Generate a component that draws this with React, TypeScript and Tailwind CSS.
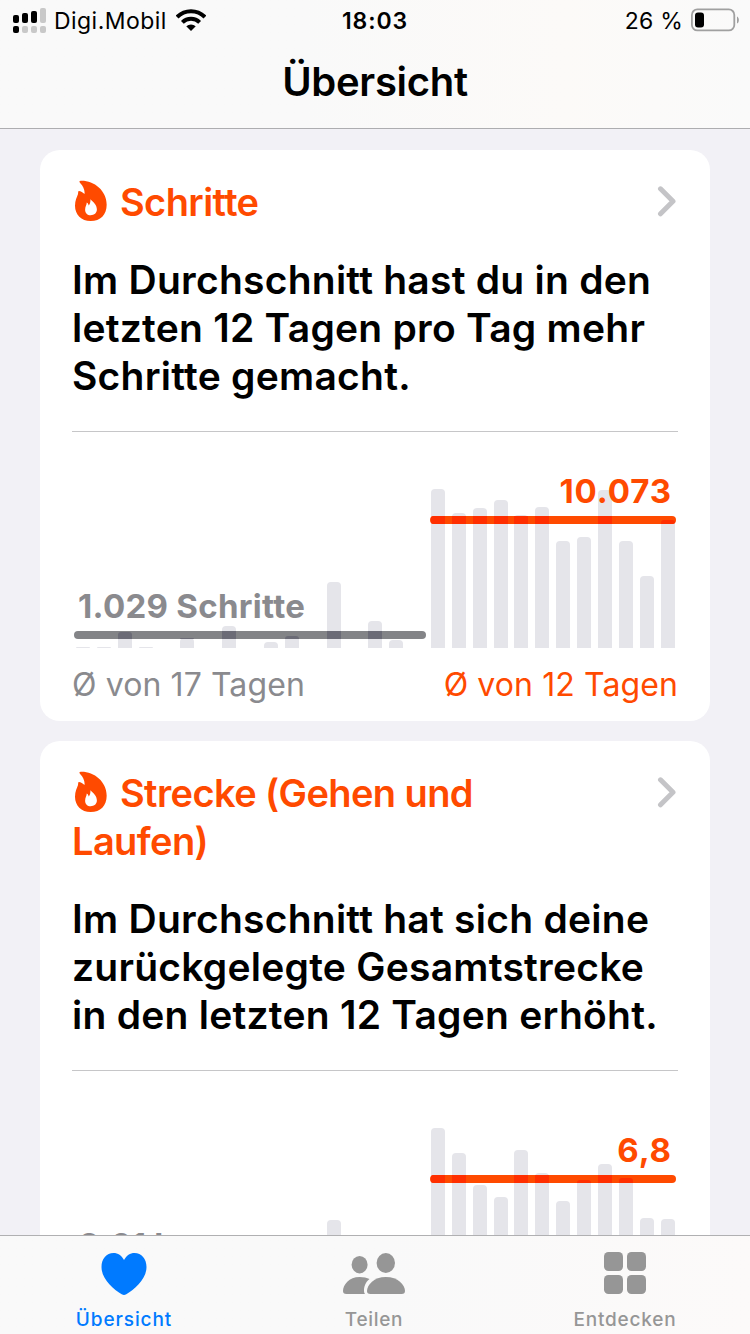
type Series = {
    value: string;
    label?: string;
    level: number;
    bars: number[];
};

type Highlight = {
    title: string;
    text: string[];
    before: Series;
    after: Series;
};

const highlights: Highlight[] = [
    {
        title: "Schritte",
        text: ["Im Durchschnitt hast du in den", "letzten 12 Tagen pro Tag mehr", "Schritte gemacht."],
        before: {
            value: "1.029 Schritte",
            label: "Ø von 17 Tagen",
            level: 9,
            bars: [1, 1, 16, 1, 0, 10, 0, 22, 0, 6, 12, 0, 66, 0, 27, 8, 0],
        },
        after: {
            value: "10.073",
            label: "Ø von 12 Tagen",
            level: 124,
            bars: [159, 135, 140, 148, 133, 141, 107, 111, 158, 107, 72, 128],
        },
    },
    {
        title: "Strecke (Gehen und Laufen)",
        text: ["Im Durchschnitt hat sich deine", "zurückgelegte Gesamtstrecke", "in den letzten 12 Tagen erhöht."],
        before: {
            value: "0,61 km",
            level: 9,
            bars: [1, 1, 16, 1, 0, 10, 0, 22, 0, 6, 12, 0, 67, 0, 27, 8, 0],
        },
        after: {
            value: "6,8",
            level: 104,
            bars: [159, 134, 102, 90, 137, 114, 86, 107, 123, 109, 69, 68],
        },
    },
];

const LINE = 8;

function Flame() {
    return (
        <svg viewBox="29 29 98 125" className="inline-block w-[32px] h-[42px] ml-[3px] mr-[13px] -mt-[9px] align-middle" fill="#ff4a00">
            <path
                fillRule="evenodd"
                d="M44 30C84 27 126 58 126 103C126 134 107 153 77 153C48 153 29 133 29 106C29 90 35 80 38 71C39 67 38 61 41 61C46 61 54 66 58 70C60 58 53 45 46 38C43 35 41 31 44 30ZM76 86C77 94 75 101 71 105C70 101 68 97 65 96C65 104 60 108 60 118C60 128 67 135 77 135C88 135 96 129 96 117C96 102 84 94 76 86Z"
            />
        </svg>
    );
}

function Chevron() {
    return (
        <svg viewBox="0 0 20 32" className="w-5 h-8 shrink-0 mt-[7px] mr-px" fill="none" stroke="#c4c4c7" strokeWidth="5" strokeLinecap="round" strokeLinejoin="round">
            <path d="M3.5 3.8L16 16.3L3.5 28.8" />
        </svg>
    );
}

function StatusBar() {
    return (
        <div className="grid grid-cols-3 items-center h-10 text-[23px] text-black">
            <div className="flex items-center pl-[13px]">
                <svg viewBox="0 0 33 25" className="w-[33px] h-[25px]">
                    <g fill="#000">
                        <rect x="0" y="7" width="6" height="8" rx="2" />
                        <rect x="9" y="5" width="6" height="10" rx="2" />
                        <rect x="18" y="3" width="6" height="12" rx="2" />
                        <rect x="0" y="18" width="6" height="7" rx="2" />
                    </g>
                    <g fill="#c8c8c8">
                        <rect x="27" y="0" width="6" height="15" rx="2" />
                        <rect x="9" y="18" width="6" height="7" rx="2" />
                        <rect x="18" y="18" width="6" height="7" rx="2" />
                        <rect x="27" y="18" width="6" height="7" rx="2" />
                    </g>
                </svg>
                <span className="ml-[8px] pt-0.5 tracking-[0.45px]">Digi.Mobil</span>
                <svg viewBox="0 0 30 22" className="w-[30px] h-[22px] ml-[9px]">
                    <clipPath id="wifi">
                        <path d="M15 22L-7 0V-4H37V0Z" />
                    </clipPath>
                    <g clipPath="url(#wifi)" fill="none" stroke="#000">
                        <circle cx="15" cy="22" r="19.7" strokeWidth="4" />
                        <circle cx="15" cy="22" r="12.2" strokeWidth="4" />
                        <circle cx="15" cy="22" r="3.3" strokeWidth="6.6" />
                    </g>
                </svg>
            </div>
            <div className="pt-0.5 text-center font-semibold tracking-[0.9px]">18:03</div>
            <div className="flex items-center justify-end pr-[11px]">
                <span className="pt-0.5 tracking-[0.2px] mr-[8px]">26 %</span>
                <svg viewBox="0 0 48 24" className="w-12 h-6">
                    <rect x="0.9" y="1.4" width="42.4" height="21" rx="5.5" fill="none" stroke="#a0a0a0" strokeWidth="1.8" />
                    <rect x="4" y="4.5" width="9" height="15" rx="3" fill="#000" />
                    <path d="M46 8.5C48.500 9.500 48.500 14.500 46 15.500Z" fill="#a0a0a0" />
                </svg>
            </div>
        </div>
    );
}

function Bars({ bars }: { bars: number[] }) {
    return (
        <div className="flex items-end gap-[6.88px] h-full">
            {bars.map((height, i) => (
                <div key={i} className="w-[14px] bg-[#e5e5ea] rounded-t-[4px]" style={{ height }} />
            ))}
        </div>
    );
}

// The average line gets a deeper shade wherever a bar reaches behind it
function AverageLine({ series, active }: { series: Series; active: boolean }) {
    return (
        <div
            className={`absolute flex items-end gap-[6.88px] h-2 rounded-full overflow-hidden ${active ? "-left-px -right-px pl-px bg-[#ff4a00]" : "-left-[2px] -right-[1.5px] pl-[2px] bg-[#838487]"}`}
            style={{ bottom: series.level }}
        >
            {series.bars.map((height, i) => (
                <div
                    key={i}
                    className={`w-[14px] shrink-0 ${height < series.level + LINE ? "rounded-t-[3px]" : ""} ${active ? "bg-[#ff2f00]" : "bg-[#6b6b76]"}`}
                    style={{ height: Math.max(0, Math.min(LINE, height - series.level)) }}
                />
            ))}
        </div>
    );
}

function Chart({ before, after }: { before: Series; after: Series }) {
    return (
        <div>
            <div className="flex gap-[6.880px] h-[216px] pl-[4px] pr-[3px] text-[33px] leading-10 font-bold">
                <div className="relative w-[348px]">
                    <Bars bars={before.bars} />
                    <AverageLine series={before} active={false} />
                    <span className="absolute left-[2px] whitespace-nowrap tracking-[0.3px] text-[#8a8a8e]" style={{ bottom: before.level + 13 }}>
                        {before.value}
                    </span>
                </div>
                <div className="relative flex-1">
                    <Bars bars={after.bars} />
                    <AverageLine series={after} active />
                    <span className="absolute right-[3px] whitespace-nowrap tracking-[0.9px] text-[#ff4a00]" style={{ bottom: after.level + 13 }}>
                        {after.value}
                    </span>
                </div>
            </div>
            <div className="flex justify-between mt-[17px] h-[39px] text-[32px] leading-10">
                <span className="tracking-[0.1px] text-[#8a8a8e]">{before.label}</span>
                <span className="tracking-[0.1px] text-[#ff4a00]">{after.label}</span>
            </div>
        </div>
    );
}

function HighlightCard({ item }: { item: Highlight }) {
    return (
        <section className="shrink-0 bg-white rounded-[20px] px-8 pt-7 pb-[17px]">
            <div className="flex items-start justify-between">
                <h2 className="w-[420px] text-[38px] leading-[48px] font-semibold tracking-[-0.6px] text-[#ff4a00]">
                    <Flame />
                    {item.title}
                </h2>
                <Chevron />
            </div>
            <p className="mt-[30px] text-[39px] leading-[48px] font-semibold tracking-[0.25px] text-black">
                {item.text.map((line) => (
                    <span key={line} className="block whitespace-nowrap">
                        {line}
                    </span>
                ))}
            </p>
            <hr className="mt-[31px] border-t border-[#c6c6c8]" />
            <Chart before={item.before} after={item.after} />
        </section>
    );
}

function TabBar() {
    return (
        <nav className="grid grid-cols-3 shrink-0 h-[99px] border-t border-[#b0b0b2] bg-linear-to-r from-[#f9f9f9] via-[#f9f9f9] to-[#fcfaf9] text-[19px] leading-6 font-medium text-[#969696]">
            <a href="#" className="flex flex-col items-center pt-[17px] pr-[2px] text-[#007aff]">
                <svg viewBox="0 0 46 42" className="w-[46px] h-[42px]" fill="currentColor">
                    <path d="M23 7C25.500 2.500 29 0 33.500 0C40.500 0 45.500 5.800 45.500 14C45.500 26 34 36 25.300 41.200C24.400 41.800 23.600 42 23 42C22.400 42 21.600 41.800 20.700 41.200C12 36 0.500 26 0.500 14C0.500 5.800 5.500 0 12.500 0C17 0 20.500 2.500 23 7Z" />
                </svg>
                <span className="mt-[13px] h-[22px] tracking-[0.9px]">Übersicht</span>
            </a>
            <a href="#" className="flex flex-col items-center pt-[17px] pr-[2px]">
                <svg viewBox="0 0 62 42" className="w-[62px] h-[42px]" fill="currentColor">
                    <ellipse cx="16.600" cy="11.700" rx="8" ry="8.700" />
                    <ellipse cx="42.800" cy="10" rx="9.200" ry="10" />
                    <path d="M26.500 26C22.500 29 21 33.500 21 37.500C21 39 21.300 40 22 41H3.500C1 41 0 40 0 38C0 32 6 24 16.600 24C20.500 24 24 24.800 26.500 26Z" />
                    <path d="M42.800 24C55 24 62 32 62 38C62 40 61 41 58.500 41H27.500C25 41 24 40 24 38C24 32 31 24 42.800 24Z" />
                </svg>
                <span className="mt-[13px] h-[22px] tracking-[0.7px]">Teilen</span>
            </a>
            <a href="#" className="flex flex-col items-center pt-[16px]">
                <svg viewBox="0 0 42 42" className="w-[42px] h-[42px]" fill="currentColor">
                    <rect x="0" y="0" width="19" height="19" rx="4.500" />
                    <rect x="23" y="0" width="19" height="19" rx="4.500" />
                    <rect x="0" y="23" width="19" height="19" rx="4.500" />
                    <rect x="23" y="23" width="19" height="19" rx="4.500" />
                </svg>
                <span className="mt-[14px] h-[22px] tracking-[0.8px]">Entdecken</span>
            </a>
        </nav>
    );
}

export default function App() {
    return (
        <div className="flex flex-col w-[750px] h-[1334px] overflow-hidden bg-[#f2f1f6] font-['Inter',sans-serif]">
            <header className="shrink-0 h-[129px] border-b border-[#adadb0] bg-linear-to-r from-[#f9f9f9] from-40% via-[#fcfaf8] via-75% to-[#fafafa]">
                <StatusBar />
                <h1 className="mt-[18px] text-center text-[40px] leading-[48px] font-semibold tracking-[-0.3px] text-black">Übersicht</h1>
            </header>
            <main className="flex flex-col flex-1 min-h-0 gap-5 px-10 pt-[21px] overflow-hidden">
                {highlights.map((item) => (
                    <HighlightCard key={item.title} item={item} />
                ))}
            </main>
            <TabBar />
        </div>
    );
}
